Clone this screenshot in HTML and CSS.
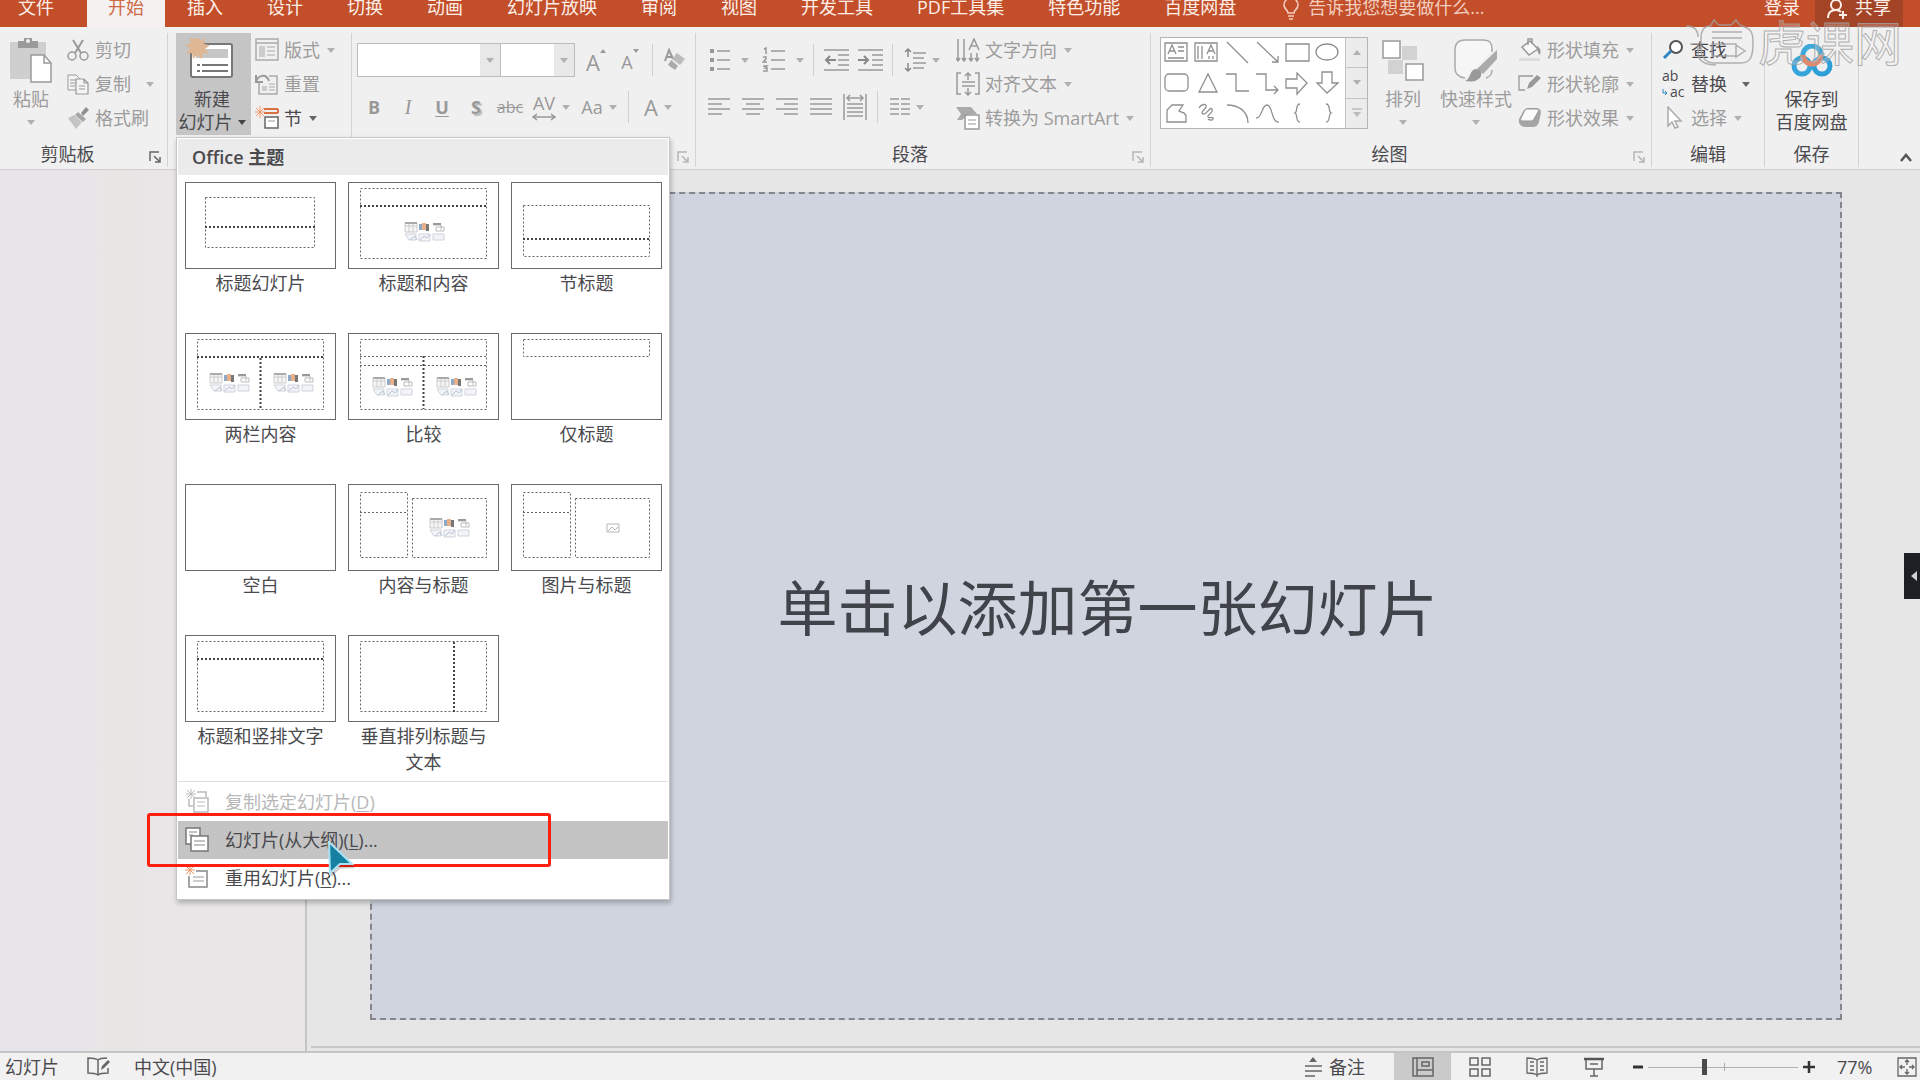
FILE: index.html
```html
<!DOCTYPE html>
<html lang="zh-CN">
<head>
<meta charset="utf-8">
<title>演示文稿</title>
<link rel="stylesheet" href="styles.css">
</head>
<body>
<svg class="defs" aria-hidden="true">
  <symbol id="caret" viewBox="0 0 8 5"><path d="M0 0h8L4 5z" fill="currentColor"/></symbol>
  <symbol id="launcher" viewBox="0 0 12 12"><path d="M1 10V1h9M5 5l5 5M11 6v5H6" fill="none" stroke="currentColor" stroke-width="1.5"/></symbol>
  <symbol id="content" viewBox="0 0 41 20">
    <path d="M1 1h12v9H1zM5 1v9M9 1v9M1 4h12" fill="#f6f6f6" stroke="#ccc"/><path d="M1 1h12" stroke="#aaa" stroke-width="2"/>
    <path d="M15 2h3v6h-3z" fill="#8fa9c8"/><path d="M18 1h4v7h-4z" fill="#e8b08a"/><path d="M22 2h3v7h-3z" fill="#777"/>
    <path d="M29 3h8v5M32 5h8v4h-8z" fill="none" stroke="#bbb"/><path d="M29 2h8" stroke="#999" stroke-width="2"/>
    <path d="M1 12h11v6H5zM15 12h11v7H15zM29 12h11v6H29z" fill="#f2f4f8" stroke="#cfd3dc"/><path d="M6 18l5-4 2 4M16 18l4-4 3 2 3-4" fill="none" stroke="#b7c2d6"/>
  </symbol>
</svg>
<div class="app">
  <header class="tabs">
    <nav class="tab-list">
      <button class="tab tab-file">文件</button>
      <button class="tab tab-active">开始</button>
      <button class="tab">插入</button>
      <button class="tab">设计</button>
      <button class="tab">切换</button>
      <button class="tab">动画</button>
      <button class="tab">幻灯片放映</button>
      <button class="tab">审阅</button>
      <button class="tab">视图</button>
      <button class="tab">开发工具</button>
      <button class="tab">PDF工具集</button>
      <button class="tab">特色功能</button>
      <button class="tab">百度网盘</button>
    </nav>
    <button class="tell-me">
      <svg width="16" height="20" viewBox="0 0 16 20"><path d="M5 13C5 10 1 9 1 5a7 7 0 0 1 14 0c0 4-4 5-4 8zM5 16h6M6 19h4" fill="none" stroke="currentColor" stroke-width="1.6"/></svg>
      告诉我您想要做什么...
    </button>
    <button class="sign-in">登录</button>
    <button class="share">
      <svg width="22" height="20" viewBox="0 0 22 20"><circle cx="10" cy="5" r="5" fill="none" stroke="currentColor" stroke-width="2"/><path d="M2 18c0-5 3-8 8-8 2 0 4 1 5 2M17 11v8M13 15h8" fill="none" stroke="currentColor" stroke-width="2"/></svg>
      共享
    </button>
  </header>

  <section class="ribbon">
    <div class="group group-clipboard">
      <div class="group-body">
        <button class="big paste off">
          <span class="big-icon"><svg width="44" height="48" viewBox="0 0 44 48"><path d="M1 5h36v37H1z" fill="#cfcfcf"/><path d="M9 4h6V1h8v3h6v7H9z" fill="#9a9a9a"/><circle cx="19" cy="4" r="2" fill="#f1f0f0"/><path d="M22 18h13l7 8v19H22z" fill="#fff" stroke="#9a9a9a" stroke-width="1.5"/><path d="M35 18v8h7" fill="none" stroke="#9a9a9a" stroke-width="1.5"/></svg></span>
          <span>粘贴</span>
          <span><svg class="caret"><use href="#caret"/></svg></span>
        </button>
        <div class="rows">
          <button class="row off"><svg width="24" height="24" viewBox="0 0 24 24"><path d="M7 2l8 13M17 2L9 15" stroke="#999" stroke-width="2"/><circle cx="6" cy="18" r="4" fill="none" stroke="#999" stroke-width="1.5"/><circle cx="18" cy="18" r="4" fill="none" stroke="#999" stroke-width="1.5"/></svg>剪切</button>
          <button class="row row-wide off"><svg width="24" height="24" viewBox="0 0 24 24"><path d="M2 3h8l3 3v12H2zM4 8h6M4 11h6M4 14h5" fill="#f4f4f4" stroke="#999"/><path d="M10 7h8l4 4v11H10zM18 7v4h4M13 14h6M13 17h6" fill="#f4f4f4" stroke="#999" stroke-width="1.2"/></svg>复制<svg class="caret"><use href="#caret"/></svg></button>
          <button class="row off"><svg width="24" height="24" viewBox="0 0 24 24"><path d="M15 7l5-6 3 3-6 6z" fill="#8f8f8f"/><path d="M12 6l8 7-3 3-8-7z" fill="#a5a5a5"/><path d="M8 9l8 7-6 7-8-11z" fill="#c4c4c4"/></svg>格式刷</button>
        </div>
      </div>
      <div class="group-label"><span>剪贴板</span><button class="launcher dark" aria-label="剪贴板选项"><svg width="12" height="12"><use href="#launcher"/></svg></button></div>
    </div>

    <div class="group group-slides">
      <div class="group-body">
        <button class="big new-slide">
          <span class="big-icon"><svg width="54" height="46" viewBox="0 0 54 46"><rect x="6" y="6" width="41" height="33" rx="2" fill="#fff" stroke="#777" stroke-width="2"/><path d="M11 11h32v9H11z" fill="#c6c6c6"/><path d="M17 27h26M17 33h26M12 27h3M12 33h3" stroke="#777" stroke-width="2"/><path d="M12 -2l3 5 5-3-1 6 6 1-5 4 4 5-6-1-1 6-5-4-4 4-1-6-6 1 4-6-5-3 6-2-2-6 6 2z" fill="#e0b795"/></svg></span>
          <span>新建</span>
          <span>幻灯片 <svg class="caret"><use href="#caret"/></svg></span>
        </button>
        <div class="rows">
          <button class="row off"><svg width="24" height="24" viewBox="0 0 24 24"><path d="M1 1h22v21H1zM1 5h22" fill="none" stroke="#aaa" stroke-width="1.5"/><path d="M4 8h6v11H4z" fill="#ccc"/><path d="M12 9h8M12 13h8M12 17h8" stroke="#aaa"/></svg>版式<svg class="caret"><use href="#caret"/></svg></button>
          <button class="row off"><svg width="24" height="24" viewBox="0 0 24 24"><path d="M14 4h8v18H4V11" fill="none" stroke="#aaa" stroke-width="1.5"/><path d="M1 3v7h7M1 10C3 3 11 1 14 9" fill="none" stroke="#999" stroke-width="2"/><path d="M7 14h5v5H7z" fill="#ccc"/><path d="M14 12h6M14 15h6M14 18h6" stroke="#aaa"/></svg>重置</button>
          <button class="row"><svg width="24" height="24" viewBox="0 0 24 24"><path d="M9 3h14M9 7h14M23 3v4" stroke="#d9703f" stroke-width="2"/><path d="M10 11h13v11H10z" fill="#fff" stroke="#666" stroke-width="1.5"/><path d="M13 15h7" stroke="#999"/><path d="M5 0v12M0 6h10M1 2l8 8M9 2l-8 8" stroke="#ee9a6c"/></svg>节<svg class="caret"><use href="#caret"/></svg></button>
        </div>
      </div>

      <div class="menu">
        <h2 class="menu-title">Office 主题</h2>
        <div class="layouts">
          <button class="layout"><svg width="151" height="88" viewBox="0 0 151 88"><rect class="frame" x=".5" y=".5" width="150" height="86"/><path class="dash" d="M20.5 15.5h109v50h-109z"/><path class="dash thick" d="M20 45h110"/></svg><span>标题幻灯片</span></button>
          <button class="layout"><svg width="151" height="88" viewBox="0 0 151 88"><rect class="frame" x=".5" y=".5" width="150" height="86"/><path class="dash" d="M12.5 6.5h126v70h-126z"/><path class="dash thick" d="M12 24h127"/><use href="#content" x="56" y="40" width="41" height="20"/></svg><span>标题和内容</span></button>
          <button class="layout"><svg width="151" height="88" viewBox="0 0 151 88"><rect class="frame" x=".5" y=".5" width="150" height="86"/><path class="dash" d="M12.5 23.5h126v51h-126z"/><path class="dash thick" d="M12 57h127"/></svg><span>节标题</span></button>
          <button class="layout"><svg width="151" height="88" viewBox="0 0 151 88"><rect class="frame" x=".5" y=".5" width="150" height="86"/><path class="dash" d="M12.5 6.5h126v70h-126z"/><path class="dash thick" d="M12 24h127M75.500 25v51"/><use href="#content" x="24" y="40" width="41" height="20"/><use href="#content" x="88" y="40" width="41" height="20"/></svg><span>两栏内容</span></button>
          <button class="layout"><svg width="151" height="88" viewBox="0 0 151 88"><rect class="frame" x=".5" y=".5" width="150" height="86"/><path class="dash" d="M12.5 6.5h126v70h-126zM12 23.500h127M12 32.500h127"/><path class="dash thick" d="M75.500 23v53"/><use href="#content" x="24" y="44" width="41" height="20"/><use href="#content" x="88" y="44" width="41" height="20"/></svg><span>比较</span></button>
          <button class="layout"><svg width="151" height="88" viewBox="0 0 151 88"><rect class="frame" x=".5" y=".5" width="150" height="86"/><path class="dash" d="M12.5 6.5h126v17h-126z"/></svg><span>仅标题</span></button>
          <button class="layout"><svg width="151" height="88" viewBox="0 0 151 88"><rect class="frame" x=".5" y=".5" width="150" height="86"/></svg><span>空白</span></button>
          <button class="layout"><svg width="151" height="88" viewBox="0 0 151 88"><rect class="frame" x=".5" y=".5" width="150" height="86"/><path class="dash" d="M12.5 8.500h47v65h-47zM12 28.500h48M64.500 14.500h74v59h-74z"/><use href="#content" x="81" y="34" width="41" height="20"/></svg><span>内容与标题</span></button>
          <button class="layout"><svg width="151" height="88" viewBox="0 0 151 88"><rect class="frame" x=".5" y=".5" width="150" height="86"/><path class="dash" d="M12.5 8.500h47v65h-47zM12 28.500h48M64.500 14.500h74v59h-74z"/><path d="M96 40h12v8H96zM97 47l4-4 3 3 3-3" fill="none" stroke="#b5b5bb"/></svg><span>图片与标题</span></button>
          <button class="layout"><svg width="151" height="88" viewBox="0 0 151 88"><rect class="frame" x=".5" y=".5" width="150" height="86"/><path class="dash" d="M12.5 6.5h126v70h-126z"/><path class="dash thick" d="M12 24h127"/></svg><span>标题和竖排文字</span></button>
          <button class="layout"><svg width="151" height="88" viewBox="0 0 151 88"><rect class="frame" x=".5" y=".5" width="150" height="86"/><path class="dash" d="M12.5 6.5h126v70h-126z"/><path class="dash thick" d="M106 7v70"/></svg><span>垂直排列标题与文本</span></button>
        </div>
        <div class="commands">
          <button class="command off"><svg width="26" height="26" viewBox="0 0 26 26"><path d="M12 3h9v5M4 10v7h4M9 9h14v14H9z" fill="#fff" stroke="#bbb" stroke-width="1.5"/><path d="M12 13h8M12 17h8" stroke="#bbb"/><path d="M6 0v10M1 5h10M2 1l8 8M10 1L2 9" stroke="#bbb"/></svg><span>复制选定幻灯片(<u>D</u>)</span></button>
          <button class="command hover"><svg width="26" height="26" viewBox="0 0 26 26"><path d="M1 1h14v16H1z" fill="#fff" stroke="#777" stroke-width="1.500"/><path d="M4 5h8M4 8h4" stroke="#888"/><path d="M6 9h17v15H6z" fill="#fff" stroke="#777" stroke-width="1.500"/><path d="M9 14h11M9 18h11" stroke="#888"/></svg><span>幻灯片(从大纲)(<u>L</u>)...</span></button>
          <button class="command"><svg width="26" height="26" viewBox="0 0 26 26"><path d="M11 6h11v16H4V11" fill="#fff" stroke="#888" stroke-width="1.5"/><path d="M8 12h11M8 16h11" stroke="#999"/><path d="M5 0v10M0 5h10M1 1l8 8M9 1L1 9" stroke="#ee9a6c"/></svg><span>重用幻灯片(<u>R</u>)...</span></button>
        </div>
      </div>
    </div>

    <div class="group group-font">
      <div class="group-body tools">
        <div class="tool-row">
          <label class="combo combo-face"><input aria-label="字体"><svg class="caret"><use href="#caret"/></svg></label>
          <label class="combo combo-size"><input aria-label="字号"><svg class="caret"><use href="#caret"/></svg></label>
          <button class="tool grow" aria-label="增大字号"><span class="glyph-large">A</span><svg width="6" height="4" viewBox="0 0 6 4"><path d="M0 4h6L3 0z" fill="#999"/></svg></button>
          <button class="tool grow" aria-label="减小字号"><span>A</span><svg width="6" height="4" viewBox="0 0 6 4"><path d="M0 0h6L3 4z" fill="#999"/></svg></button>
          <i class="bar"></i>
          <button class="tool" aria-label="清除格式"><svg width="22" height="24" viewBox="0 0 22 24"><path d="M1 13L5 2l4 9M3 9h5" fill="none" stroke="#999" stroke-width="2"/><path d="M13 5l8 6-5 6-8-6z" fill="#bbb"/><path d="M7 12l7 6-3 4-7-5z" fill="#aaa"/></svg></button>
        </div>
        <div class="tool-row">
          <button class="tool"><b>B</b></button>
          <button class="tool serif"><em>I</em></button>
          <button class="tool"><b><u>U</u></b></button>
          <button class="tool shadow"><b>S</b></button>
          <button class="tool small"><s>abc</s></button>
          <button class="tool tool-drop"><span class="spacing-glyph">AV<svg width="24" height="8" viewBox="0 0 24 8"><path d="M1 4h22M5 1L1 4l4 3M19 1l4 3-4 3" fill="none" stroke="#999" stroke-width="1.500"/></svg></span><svg class="caret"><use href="#caret"/></svg></button>
          <button class="tool tool-drop">Aa<svg class="caret"><use href="#caret"/></svg></button>
          <i class="bar"></i>
          <button class="tool tool-drop"><span class="glyph-large">A</span><svg class="caret"><use href="#caret"/></svg></button>
        </div>
      </div>
      <div class="group-label"><button class="launcher" aria-label="字体选项"><svg width="12" height="12"><use href="#launcher"/></svg></button></div>
    </div>

    <div class="group group-paragraph">
      <div class="group-body">
        <div class="tools">
          <div class="tool-row">
            <button class="tool tool-list" aria-label="项目符号"><svg width="22" height="24" viewBox="0 0 22 24"><path d="M8 3h13M8 12h13M8 21h13" stroke="#999" stroke-width="1.500"/><path d="M1 1h4v4H1zM1 10h4v4H1zM1 19h4v4H1z" fill="#999"/></svg><svg class="caret"><use href="#caret"/></svg></button>
            <button class="tool tool-list" aria-label="编号"><svg width="24" height="26" viewBox="0 0 24 26"><path d="M9 4h14M9 13h14M9 22h14M2 2l2-1v6M1 10h3v2l-3 3h4M1 19h4l-2 2h2v3H1" fill="none" stroke="#999" stroke-width="1.500"/></svg><svg class="caret"><use href="#caret"/></svg></button>
            <i class="bar"></i>
            <button class="tool" aria-label="减少缩进"><svg width="25" height="22" viewBox="0 0 25 22"><path d="M0 1h25M14 6h11M14 11h11M14 16h11M0 21h25" stroke="#999" stroke-width="1.500"/><path d="M12 11H2M6 7l-4 4 4 4" fill="none" stroke="#888" stroke-width="2"/></svg></button>
            <button class="tool" aria-label="增加缩进"><svg width="25" height="22" viewBox="0 0 25 22"><path d="M0 1h25M14 6h11M14 11h11M14 16h11M0 21h25" stroke="#999" stroke-width="1.500"/><path d="M0 11h10M6 7l4 4-4 4" fill="none" stroke="#888" stroke-width="2"/></svg></button>
            <i class="bar"></i>
            <button class="tool tool-drop" aria-label="行距"><svg width="22" height="26" viewBox="0 0 22 26"><path d="M9 6h13M9 11h11M9 16h13M9 21h11" stroke="#999" stroke-width="1.500"/><path d="M4 2v8M4 16v8M1 5l3-3 3 3M1 21l3 3 3-3" fill="none" stroke="#888" stroke-width="1.500"/></svg><svg class="caret"><use href="#caret"/></svg></button>
          </div>
          <div class="tool-row">
            <button class="tool" aria-label="左对齐"><svg width="22" height="18" viewBox="0 0 22 18"><path d="M0 1h22M0 6h14M0 11h22M0 16h14" stroke="#999" stroke-width="1.500"/></svg></button>
            <button class="tool" aria-label="居中"><svg width="22" height="18" viewBox="0 0 22 18"><path d="M0 1h22M4 6h14M0 11h22M4 16h14" stroke="#999" stroke-width="1.500"/></svg></button>
            <button class="tool" aria-label="右对齐"><svg width="22" height="18" viewBox="0 0 22 18"><path d="M0 1h22M8 6h14M0 11h22M8 16h14" stroke="#999" stroke-width="1.500"/></svg></button>
            <button class="tool" aria-label="两端对齐"><svg width="22" height="18" viewBox="0 0 22 18"><path d="M0 1h22M0 6h22M0 11h22M0 16h22" stroke="#999" stroke-width="1.500"/></svg></button>
            <button class="tool" aria-label="分散对齐"><svg width="24" height="26" viewBox="0 0 24 26"><path d="M1 0v26M23 0v26M4 10h16M4 14h16M4 18h16M4 22h16M4 4h16M7 1L4 4l3 3M17 1l3 3-3 3" fill="none" stroke="#999" stroke-width="1.500"/></svg></button>
            <i class="bar"></i>
            <button class="tool tool-drop" aria-label="分栏"><svg width="20" height="18" viewBox="0 0 20 18"><path d="M0 1h9M11 1h9M0 6h9M11 6h9M0 11h9M11 11h9M0 16h9M11 16h9" stroke="#999" stroke-width="1.500"/></svg><svg class="caret"><use href="#caret"/></svg></button>
          </div>
        </div>
        <div class="rows">
          <button class="row off"><svg width="24" height="24" viewBox="0 0 24 24"><path d="M2 1v22M8 1v22M0 20l2 3 2-3M6 20l2 3 2-3M15 15v8M21 15v8M13 20l2 3 2-3M19 20l2 3 2-3M13 12l5-11 5 11M15 8h6" fill="none" stroke="#999" stroke-width="1.500"/></svg>文字方向<svg class="caret"><use href="#caret"/></svg></button>
          <button class="row off"><svg width="24" height="24" viewBox="0 0 24 24"><path d="M5 1H1v21h4M19 1h4v21h-4M6 10h13M6 14h13M12 1v7M9 4l3-3 3 3M12 16v7M9 20l3 3 3-3" fill="none" stroke="#999" stroke-width="1.500"/></svg>对齐文本<svg class="caret"><use href="#caret"/></svg></button>
          <button class="row off"><svg width="24" height="24" viewBox="0 0 24 24"><path d="M0 1h15l6 7h-8l-7 6H1l4-6z" fill="#aaa"/><path d="M9 9h14v14H9z" fill="#fff" stroke="#999" stroke-width="1.500"/><path d="M12 14h8M12 18h8" stroke="#999"/></svg>转换为 SmartArt<svg class="caret"><use href="#caret"/></svg></button>
        </div>
      </div>
      <div class="group-label"><span>段落</span><button class="launcher" aria-label="段落选项"><svg width="12" height="12"><use href="#launcher"/></svg></button></div>
    </div>

    <div class="group group-drawing">
      <div class="group-body">
        <div class="shapes">
          <svg width="184" height="90" viewBox="0 0 184 90" fill="none" stroke="#8f8f8f" stroke-width="1.300">
            <path d="M4 5h22v18H4zM7 16l4-9 4 9M8 13h6M17 9h6M17 13h6M7 20h16M34 5h22v18H34zM37 8v13M41 8v13M46 16l4-9 4 9M47 13h6M48 18v3M52 18v3"/>
            <path d="M66 4l21 21M96 4l21 20M117 18v6h-6M125 6h23v17h-23z"/><ellipse cx="166" cy="14" rx="11" ry="8"/>
            <rect x="4" y="36" width="23" height="17" rx="4"/><path d="M47 36l9 18H38zM65 36h10v17h13M95 36h10v16h12M113 48l4 4-4 4M125 41h11v-6l10 10-10 11v-6h-11zM161 34h10v11h6l-11 10-10-10h5z"/>
            <path d="M6 84V72l5-5h11l-4 6c2 2 6 0 7 5v6zM38 70c2-4 8-5 7-1-1 3-6 5-3 7 4 1 7-8 9-5 2 4-5 5-4 8 1 2 6-1 5 2-1 2-4 1-5 0M66 67c10 0 21 5 21 18M95 80c7 0 5-13 11-13s4 18 12 17M139 66c-5 0-2 8-5 9 3 1 0 9 5 9M165 66c5 0 2 8 5 9-3 1 0 9-5 9"/>
          </svg>
          <div class="shape-scroll">
            <button aria-label="上一行"><svg class="caret up"><use href="#caret"/></svg></button>
            <button aria-label="下一行"><svg class="caret"><use href="#caret"/></svg></button>
            <button aria-label="其他形状"><svg width="10" height="10" viewBox="0 0 10 10"><path d="M0 1h10" stroke="#bbb" stroke-width="1.500"/><path d="M1 4h8L5 9z" fill="#bbb"/></svg></button>
          </div>
        </div>
        <button class="big arrange off">
          <span class="big-icon"><svg width="42" height="42" viewBox="0 0 42 42"><path d="M20 6h15v14H20zM6 20h15v14H6z" fill="#d2d2d2"/><path d="M1 1h17v17H1zM24 24h17v16H24z" fill="#fff" stroke="#999" stroke-width="1.500"/></svg></span>
          <span>排列</span>
          <span><svg class="caret"><use href="#caret"/></svg></span>
        </button>
        <button class="big styles off">
          <span class="big-icon"><svg width="46" height="46" viewBox="0 0 46 46"><path d="M12 40C4 39 2 35 2 30V12C2 5 5 2 12 2h18c7 0 9 3 9 10v2M39 32c0 5-3 7-6 8" fill="#f6f6f6" stroke="#aaa" stroke-width="1.500"/><path d="M44 12v9L30 36l-6-5z" fill="#aaa"/><path d="M22 31c5 0 7 3 6 7-3 6-10 6-16 5 6-2 4-10 10-12z" fill="#999"/></svg></span>
          <span>快速样式</span>
          <span><svg class="caret"><use href="#caret"/></svg></span>
        </button>
        <div class="rows">
          <button class="row off"><svg width="24" height="24" viewBox="0 0 24 24"><path d="M4 9l8-6 8 8-9 6zM10 7V1h4v5" fill="#f8f8f8" stroke="#999" stroke-width="1.500"/><path d="M19 8c4 3 4 5 3 9-2-2-3-4-3-9z" fill="#999"/><path d="M1 20h21v3H1z" fill="#ddd"/></svg>形状填充<svg class="caret"><use href="#caret"/></svg></button>
          <button class="row off"><svg width="24" height="24" viewBox="0 0 24 24"><path d="M15 4H1v14h6" fill="none" stroke="#999" stroke-width="1.300"/><path d="M19 3l4 3-9 9-5 2 2-6z" fill="#999"/></svg>形状轮廓<svg class="caret"><use href="#caret"/></svg></button>
          <button class="row off"><svg width="24" height="24" viewBox="0 0 24 24"><path d="M1 13L6 4c1-1 2-2 4-2h8c3 0 5 2 5 4l-2 10c-1 3-3 5-6 5H7c-4 0-7-3-6-8z" fill="#a5a5a5"/><path d="M3 12l4-8c1-1 2-1 3-1h8c2 0 3 1 2 3l-4 7c-1 1-2 2-3 2H5c-2 0-3-1-2-3z" fill="#fafafa" stroke="#999"/></svg>形状效果<svg class="caret"><use href="#caret"/></svg></button>
        </div>
      </div>
      <div class="group-label"><span>绘图</span><button class="launcher" aria-label="绘图选项"><svg width="12" height="12"><use href="#launcher"/></svg></button></div>
    </div>

    <div class="group group-edit">
      <div class="group-body">
        <div class="rows">
          <button class="row"><svg width="24" height="24" viewBox="0 0 24 24"><circle cx="14" cy="9" r="6" fill="#fff" stroke="#555" stroke-width="2"/><path d="M9 13l-7 7" stroke="#2e86c1" stroke-width="3"/></svg>查找</button>
          <button class="row row-wide"><span class="replace-glyph"><span>ab</span><span class="replace-to"><svg width="6" height="7" viewBox="0 0 6 7"><path d="M1 0v4h4M3 2l2 2-2 2" fill="none" stroke="#2e86c1"/></svg>ac</span></span>替换<svg class="caret"><use href="#caret"/></svg></button>
          <button class="row off"><svg width="24" height="24" viewBox="0 0 24 24"><path d="M6 1l13 14h-6l3 6-3 1-3-6-4 4z" fill="#fff" stroke="#aaa" stroke-width="1.500"/></svg>选择<svg class="caret"><use href="#caret"/></svg></button>
        </div>
      </div>
      <div class="group-label"><span>编辑</span></div>
    </div>

    <div class="group group-save">
      <div class="group-body">
        <button class="big save">
          <span class="big-icon"><svg width="42" height="34" viewBox="0 0 42 34" fill="none" stroke-width="5"><circle cx="11" cy="22" r="8" stroke="#35a5dc"/><circle cx="31" cy="22" r="8" stroke="#2f9fd8"/><path d="M12 11a9 9 0 0 1 18 0" stroke="#3fa9dc"/><path d="M12 11a9 9 0 0 0 18 0" stroke="#e08a70"/></svg></span>
          <span>保存到</span>
          <span>百度网盘</span>
        </button>
      </div>
      <div class="group-label"><span>保存</span></div>
    </div>
    <button class="collapse" aria-label="折叠功能区"><svg width="12" height="10" viewBox="0 0 12 10"><path d="M1 8l5-6 5 6" fill="none" stroke="#555" stroke-width="2.500"/></svg></button>
  </section>

  <main class="workspace">
    <aside class="thumbs"></aside>
    <section class="canvas">
      <div class="slide"><p>单击以添加第一张幻灯片</p></div>
    </section>
  </main>

  <footer class="status">
    <span class="status-slide">幻灯片</span>
    <button class="proof" aria-label="拼写检查"><svg width="24" height="20" viewBox="0 0 24 20"><path d="M11 3C8 1 5 1 1 1v15c4 0 7 0 10 2 2-2 5-2 10-2v-5M11 3v15M11 3c2-2 5-2 9-2" fill="none" stroke="#666" stroke-width="1.500"/><path d="M14 13l1-4 6-6 2 2-6 6z" fill="#666"/></svg></button>
    <span class="lang">中文(中国)</span>
    <button class="notes"><svg width="17" height="20" viewBox="0 0 17 20"><path d="M8 0l4 5H4z" fill="#666"/><path d="M0 9h17M0 14h17M0 19h10" stroke="#666" stroke-width="1.500"/></svg>备注</button>
    <div class="views">
      <button class="view view-on" aria-label="普通视图"><svg width="22" height="20" viewBox="0 0 22 20"><path d="M1 1h20v18H1zM5 1v18M5 13h16M10 5h7v4h-7z" fill="none" stroke="#666" stroke-width="1.500"/></svg></button>
      <button class="view" aria-label="幻灯片浏览"><svg width="22" height="20" viewBox="0 0 22 20"><path d="M1 1h8v7H1zM13 1h8v7h-8zM1 12h8v7H1zM13 12h8v7h-8z" fill="none" stroke="#666" stroke-width="1.500"/></svg></button>
      <button class="view" aria-label="阅读视图"><svg width="22" height="20" viewBox="0 0 22 20"><path d="M1 1c4 0 7 0 10 2 3-2 6-2 10-2v15c-4 0-7 0-10 2-3-2-6-2-10-2zM11 3v17M4 5h4M4 9h4M4 13h4M14 5h4M14 9h4M14 13h4" fill="none" stroke="#666" stroke-width="1.300"/></svg></button>
      <button class="view" aria-label="幻灯片放映"><svg width="20" height="20" viewBox="0 0 20 20"><path d="M0 2h20" stroke="#555" stroke-width="2.500"/><path d="M2 3v9h16V3M10 12v7M6 19h8M6 7h8" fill="none" stroke="#666" stroke-width="1.500"/></svg></button>
    </div>
    <div class="zoom">
      <button class="zoom-btn" aria-label="缩小"><svg width="10" height="12" viewBox="0 0 10 12"><path d="M0 6h10" stroke="#333" stroke-width="3"/></svg></button>
      <input type="range" min="0" max="100" value="37" aria-label="缩放">
      <button class="zoom-btn" aria-label="放大"><svg width="12" height="12" viewBox="0 0 12 12"><path d="M0 6h12M6 0v12" stroke="#333" stroke-width="2.500"/></svg></button>
    </div>
    <span class="percent">77%</span>
    <button class="fit" aria-label="适应窗口"><svg width="20" height="20" viewBox="0 0 20 20"><path d="M1 1h18v18H1zM10 3v5M10 12v5M3 10h5M12 10h5M8 5l2-2 2 2M8 15l2 2 2-2M5 8l-2 2 2 2M15 8l2 2-2 2" fill="none" stroke="#666" stroke-width="1.300"/></svg></button>
  </footer>

  <div class="watermark">
    <svg width="74" height="50" viewBox="0 0 74 50"><path d="M2 8c8 0 12 4 12 11M24 8c3 2 4-4 6-6 2 2 3 5 6 5h10c3 0 4-4 6-5 2 2 2 5 6 6 9 3 11 6 11 16 0 14-2 21-12 21H30c-8 0-13-6-13-14V20c0-8 3-11 7-12zM6 26h8v9c0 9 9 12 18 12M28 14h30M28 20h30M28 26h24v12H28zM52 27l9 6-9 6z"/></svg>
    <span>虎课网</span>
  </div>
  <div class="callout"></div>
  <svg class="pointer" width="32" height="36" viewBox="0 0 32 36"><path d="M4 3l24 24-15 1-9 8z" fill="#00000030"/><path d="M2 1l23 22H13l-10 9z" fill="#15809f" stroke="#a9e2f5" stroke-width="2"/></svg>
  <button class="drawer" aria-label="展开侧栏"><svg width="6" height="10" viewBox="0 0 6 10"><path d="M6 0v10L0 5z" fill="#d0d0d0"/></svg></button>
</div>
</body>
</html>
```
FILE: styles.css
```css
* { box-sizing: border-box; }

body {
  margin: 0;
  font-family: "Open Sans", "Noto Sans CJK SC", sans-serif;
  font-size: 18px;
  line-height: 24px;
  color: #4a4a4e;
  background: #e6e6e6;
}

button {
  padding: 0;
  border: 0;
  background: none;
  font: inherit;
  color: inherit;
  white-space: nowrap;
}

svg { flex: none; }
.defs { position: absolute; width: 0; height: 0; }

.app {
  position: relative;
  display: flex;
  flex-direction: column;
  height: 100vh;
  overflow: hidden;
}

/* Tab strip */
.tabs {
  display: flex;
  flex: none;
  height: 27px;
  overflow: hidden;
  background: #c24f2a;
  color: #fdeee8;
  line-height: 14px;
}
.tab-list { display: flex; }
.tab { padding: 0 22px 13px; }
.tab-file { width: 87px; padding: 0 33px 13px 18px; }
.tab-active { padding: 0 21px 13px; background: #f4f1f0; color: #cf6a48; }
.tell-me {
  display: flex;
  align-items: flex-start;
  gap: 9px;
  margin-left: 25px;
  color: #f3cdbf;
}
.sign-in { margin-left: auto; padding: 0 15px 13px; }
.share {
  display: flex;
  align-items: flex-start;
  gap: 7px;
  margin-right: 17px;
  padding: 0 12px 0 11px;
  background: #a34426;
}

/* Ribbon */
.ribbon {
  display: flex;
  flex: none;
  padding: 6px 0 2px;
  border-bottom: 1px solid #cfcfcf;
  background: #f1f0f0;
}
.group {
  position: relative;
  flex: none;
  border-right: 1px solid #d4d4d4;
}
.group-clipboard { width: 168px; }
.group-slides { width: 184px; padding-left: 8px; }
.group-font { width: 344px; padding-left: 5px; }
.group-paragraph { width: 455px; padding-left: 6px; }
.group-drawing { width: 501px; padding-left: 9px; }
.group-edit { width: 113px; padding-left: 6px; }
.group-save { width: 94px; }
.group-body { display: flex; height: 102px; }
.group-label {
  display: flex;
  justify-content: center;
  height: 26px;
  margin-top: 6px;
  padding-right: 32px;
  line-height: 26px;
}
.group-edit .group-label { padding-right: 6px; }
.group-save .group-label { padding-right: 0; }
.launcher {
  position: absolute;
  right: 6px;
  bottom: 4px;
  line-height: 12px;
  color: #b5b5b5;
}
.dark { color: #666; }
.off { color: #9c9c9c; }

.caret { width: 8px; height: 5px; color: #b0b0b0; }
.up { transform: rotate(180deg); }

.big {
  display: flex;
  flex-direction: column;
  align-items: center;
  line-height: 23px;
}
.big > span { display: flex; align-items: center; gap: 5px; height: 23px; }
.big > .big-icon { height: 55px; }
.paste { width: 62px; }
.new-slide { width: 75px; padding-right: 3px; background: #c5c5c5; }
.new-slide .caret { color: #444; }
.arrange { width: 60px; margin-left: 5px; }
.styles { width: 84px; margin-left: 1px; }
.save { width: 100%; }

.rows { display: flex; flex-direction: column; padding-left: 4px; }
.row {
  display: flex;
  align-items: center;
  gap: 5px;
  height: 34px;
}
.row .caret { margin-left: 2px; }
.row-wide .caret { margin-left: 10px; color: #666; }
.row-wide.off .caret { color: #b0b0b0; }
.group-slides .row:not(.off) .caret { color: #666; }
.group-paragraph .rows { padding-left: 10px; }
.group-drawing .rows { padding-left: 0; }
.replace-glyph {
  display: flex;
  flex-direction: column;
  align-items: flex-start;
  width: 24px;
  font-size: 14px;
  line-height: 16px;
}
.replace-to { display: flex; align-items: center; gap: 2px; }

.tools { display: flex; flex-direction: column; gap: 13px; padding-top: 10px; }
.tool-row {
  display: flex;
  align-items: center;
  height: 34px;
  color: #999;
}
.tool {
  display: flex;
  align-items: center;
  justify-content: center;
  width: 34px;
  height: 34px;
}
.tool-drop { width: 48px; gap: 6px; }
.tool-list { justify-content: flex-start; width: 53px; padding-left: 7px; gap: 10px; }
.bar { width: 1px; height: 32px; margin: 0 5px; background: #d0d0d0; }
.grow { align-items: flex-start; }
.grow svg { margin-top: 6px; }
.grow span { line-height: 38px; }
.glyph-large { font-size: 22px; }
.serif { font-family: "Liberation Serif", serif; font-size: 20px; }
.small { font-size: 16px; }
.shadow b { text-shadow: 2px 2px 1px #bbb; }
.spacing-glyph { display: flex; flex-direction: column; align-items: center; line-height: 20px; }

.combo {
  display: flex;
  align-items: center;
  height: 34px;
  padding-right: 6px;
  border: 1px solid #bdbdbd;
  background: #e9e8e8;
}
.combo input {
  flex: 1;
  width: 0;
  height: 32px;
  margin-right: 6px;
  border: 0;
  background: #fff;
}
.combo-face { width: 144px; }
.combo-size { width: 75px; margin: 0 4px 0 -1px; }

.shapes {
  display: flex;
  height: 92px;
  margin-top: 4px;
  border: 1px solid #b5b5b5;
  background: #fff;
}
.shape-scroll {
  display: flex;
  flex-direction: column;
  width: 22px;
  border-left: 1px solid #c4c4c4;
  background: #ececec;
}
.shape-scroll button {
  display: flex;
  flex: 1;
  align-items: center;
  justify-content: center;
}
.shape-scroll button + button { border-top: 1px solid #c4c4c4; }

.collapse { margin: auto 8px 4px auto; line-height: 12px; }

/* New-slide menu */
.menu {
  position: absolute;
  z-index: 2;
  top: 104px;
  left: 8px;
  width: 494px;
  padding: 1px 1px 2px;
  border: 1px solid #c6c6c6;
  background: #fff;
  box-shadow: 1px 3px 5px #00000040;
}
.menu-title {
  margin: 0;
  padding: 0 14px;
  background: #ebebeb;
  font-size: 18px;
  font-weight: 600;
  line-height: 36px;
}
.layouts {
  display: grid;
  grid-template-columns: repeat(3, 151px);
  grid-auto-rows: 139px;
  gap: 12px;
  padding: 7px;
  border-bottom: 1px solid #dedede;
}
.layout {
  display: flex;
  flex-direction: column;
  align-items: center;
  line-height: 26px;
  white-space: normal;
}
.layout span { max-width: 130px; }
.frame { fill: #fff; stroke: #6a6a6a; }
.dash { fill: none; stroke: #666; stroke-dasharray: 2 2; }
.thick { stroke: #444; stroke-width: 2; }
.commands { display: flex; flex-direction: column; padding-top: 1px; }
.command {
  display: flex;
  align-items: center;
  gap: 14px;
  height: 38px;
  padding-left: 7px;
}
.command.off { color: #b8b8b8; }
.hover { background: #c4c4c4; }
u { text-underline-offset: 2px; }

/* Workspace */
.workspace { display: flex; flex: 1; min-height: 0; }
.thumbs {
  flex: none;
  width: 307px;
  border-right: 2px solid #c4c4c4;
  background: linear-gradient(90deg, #e7e5e9 85px, #e8e6e4 110px, #e8e6e6 150px);
}
.canvas {
  display: flex;
  flex: 1;
  margin: 0 0 3px 4px;
  padding: 22px 78px 26px 59px;
  border-bottom: 2px solid #c8c8c8;
}
.slide {
  display: flex;
  flex: 1;
  align-items: center;
  justify-content: center;
  padding: 3px 0 0 3px;
  border: 2px dashed #85868a;
  background: #d0d4df;
}
.slide p {
  margin: 0;
  font-size: 60px;
  line-height: 80px;
  color: #404349;
}

/* Status bar */
.status {
  display: flex;
  flex: none;
  align-items: center;
  height: 29px;
  padding: 0 3px 0 5px;
  border-top: 2px solid #c4c4c4;
  background: #f2f1f1;
}
.status svg { display: block; }
.proof { margin-left: 28px; }
.lang { margin-left: 23px; }
.notes { display: flex; align-items: center; gap: 7px; margin-left: auto; }
.views { display: flex; margin-left: 29px; }
.view {
  display: flex;
  align-items: center;
  justify-content: center;
  width: 57px;
  height: 27px;
}
.view-on { background: #cacaca; }
.zoom { display: flex; align-items: center; gap: 5px; margin-left: 11px; }
.zoom input {
  width: 150px;
  height: 16px;
  margin: 0;
  appearance: none;
  background:
    linear-gradient(#aaa, #aaa) 76px 4px / 1px 8px no-repeat,
    linear-gradient(#b0b0b0, #b0b0b0) 0 8px / 100% 1px no-repeat;
}
.zoom input::-webkit-slider-thumb {
  appearance: none;
  width: 5px;
  height: 16px;
  background: #4a4a4a;
}
.percent { width: 59px; padding-left: 22px; white-space: nowrap; }
.fit { margin-left: 23px; }

/* Overlays */
.watermark {
  position: absolute;
  z-index: 3;
  top: 18px;
  right: 18px;
  display: flex;
  align-items: center;
  font-size: 48px;
  line-height: 50px;
  color: #ffffff30;
  -webkit-text-stroke: 1px #a0a0a0d0;
}
.watermark svg { fill: none; stroke: #a0a0a0d0; stroke-width: 1.5px; }
.callout {
  position: absolute;
  z-index: 3;
  top: 813px;
  left: 147px;
  width: 404px;
  height: 54px;
  border: 3px solid #ff2010;
  border-radius: 3px;
}
.pointer { position: absolute; z-index: 4; top: 841px; left: 327px; }
.drawer {
  position: absolute;
  top: 553px;
  right: 0;
  display: flex;
  align-items: center;
  justify-content: center;
  width: 16px;
  height: 46px;
  padding-left: 3px;
  background: #1e1f25;
}
```
